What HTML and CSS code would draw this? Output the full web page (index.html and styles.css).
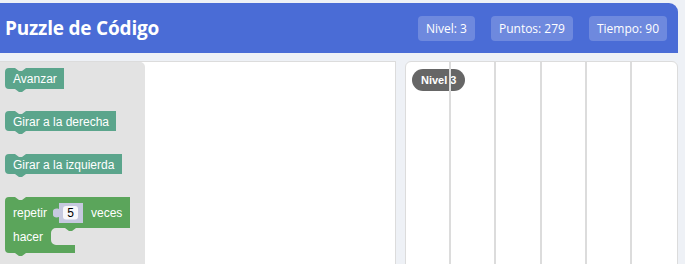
FILE: index.html
```html
<!DOCTYPE html>
<html lang="es">
<head>
<meta charset="utf-8">
<title>Puzzle de Código</title>
<link rel="stylesheet" href="styles.css">
</head>
<body>
<div class="app">
  <header class="header">
    <h1 class="title">Puzzle de Código</h1>
    <div class="stats">
      <span class="stat">Nivel: 3</span>
      <span class="stat">Puntos: 279</span>
      <span class="stat">Tiempo: 90</span>
    </div>
  </header>
  <main class="main">
    <section class="workspace">
      <div class="toolbox">
        <svg class="block" width="60" height="25" viewBox="0 0 60 25">
          <path class="motion" d="M0,4 A4,4 0 0 1 4,0 H10 l4,3 h3 l4,-3 H59 V21 H21 l-4,3 h-3 l-4,-3 H4 A4,4 0 0 1 0,17 Z"/>
          <text class="btext" x="8" y="15">Avanzar</text>
        </svg>
        <svg class="block" width="112" height="25" viewBox="0 0 112 25">
          <path class="motion" d="M0,4 A4,4 0 0 1 4,0 H10 l4,3 h3 l4,-3 H111 V20 H21 l-4,3 h-3 l-4,-3 H4 A4,4 0 0 1 0,16 Z"/>
          <text class="btext" x="8" y="14.5">Girar a la derecha</text>
        </svg>
        <svg class="block" width="118" height="25" viewBox="0 0 118 25">
          <path class="motion" d="M0,4 A4,4 0 0 1 4,0 H10 l4,3 h3 l4,-3 H117 V20 H21 l-4,3 h-3 l-4,-3 H4 A4,4 0 0 1 0,16 Z"/>
          <text class="btext" x="8" y="14.5">Girar a la izquierda</text>
        </svg>
        <svg class="block" width="126" height="60" viewBox="0 0 126 60">
          <path class="loop" d="M0,4 A4,4 0 0 1 4,0 H10 l4,3 h3 l4,-3 H125 V31 H71 l-4,3 h-3 l-4,-3 H51 A5,5 0 0 0 46,36 V43 A5,5 0 0 0 51,48 H70 V56 H21 l-4,3 h-3 l-4,-3 H4 A4,4 0 0 1 0,52 Z"/>
          <path class="shadow" d="M54,6 H78 V26 H54 V20 C51,21 48,20 48,18 V14 C48,12 51,11 54,12 Z"/>
          <rect class="field" x="58" y="9" width="15" height="13.5" rx="3"/>
          <text class="ftext" x="65.5" y="20" text-anchor="middle">5</text>
          <text class="btext" x="8" y="19.5">repetir</text>
          <text class="btext" x="86" y="19.5">veces</text>
          <text class="btext" x="8" y="44">hacer</text>
        </svg>
      </div>
      <div class="canvas"></div>
    </section>
    <section class="maze">
      <span class="level-badge">Nivel 3</span>
      <div class="col"></div>
      <div class="col"></div>
      <div class="col"></div>
      <div class="col"></div>
      <div class="col"></div>
      <div class="col last"></div>
    </section>
  </main>
</div>
</body>
</html>
```

FILE: styles.css
```css
html, body {
  margin: 0;
  padding: 0;
}
body {
  background: #eef1f6;
  font-family: "Open Sans", "Liberation Sans", sans-serif;
  overflow: hidden;
}
.app {
  padding: 3px 7px 0 0;
  display: flex;
  flex-direction: column;
  gap: 8px;
}
.header {
  height: 50px;
  background: #4a6cd6;
  border-radius: 0 9px 0 0;
  display: flex;
  align-items: center;
  justify-content: space-between;
  padding: 0 11px 0 5px;
  box-sizing: border-box;
}
.title {
  margin: 0;
  color: #fff;
  font-size: 19px;
  font-weight: 700;
  letter-spacing: -0.2px;
}
.stats {
  display: flex;
  gap: 16px;
}
.stat {
  background: rgba(255, 255, 255, 0.2);
  color: #fff;
  font-size: 12px;
  line-height: 25px;
  height: 25px;
  padding: 0 8px;
  border-radius: 4px;
}
.main {
  display: flex;
  gap: 9px;
  height: 230px;
}
.workspace {
  width: 396px;
  flex: none;
  display: flex;
  background: #fff;
  border-top: 1px solid #dcdcdc;
  border-right: 1px solid #dcdcdc;
  box-sizing: border-box;
}
.toolbox {
  width: 145px;
  background: #e3e3e3;
  border-radius: 0 5px 0 0;
  display: flex;
  flex-direction: column;
  align-items: flex-start;
  gap: 18px;
  padding: 6px 0 0 5px;
  box-sizing: border-box;
}
.block {
  display: block;
}
.motion {
  fill: #5ba58c;
}
.loop {
  fill: #5ba55b;
}
.shadow {
  fill: #c6c9df;
}
.field {
  fill: #fff;
  opacity: 0.85;
}
.btext {
  font-family: "Liberation Sans", Arial, sans-serif;
  font-size: 12px;
  fill: #fff;
}
.ftext {
  font-family: "Liberation Sans", Arial, sans-serif;
  font-size: 12px;
  fill: #000;
}
.canvas {
  flex: 1;
}
.maze {
  flex: 1;
  position: relative;
  background: #fff;
  border: 1px solid #dcdcdc;
  border-radius: 6px;
  display: grid;
  grid-template-columns: repeat(6, 1fr);
}
.level-badge {
  position: absolute;
  top: 7px;
  left: 6px;
  height: 22px;
  line-height: 22px;
  padding: 0 9px;
  border-radius: 11px;
  background: #666;
  color: #fff;
  font-family: "Liberation Sans", Arial, sans-serif;
  font-size: 11px;
  font-weight: 700;
}
.col {
  position: relative;
  border-right: 2px solid #dcdcdc;
}
.col.last {
  border-right: none;
}
```
